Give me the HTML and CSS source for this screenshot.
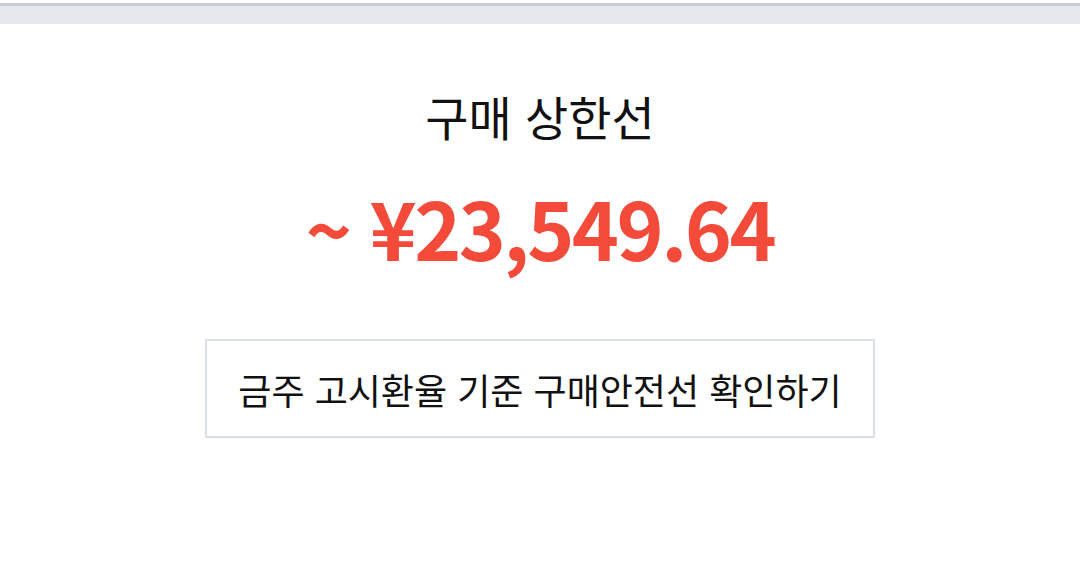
FILE: index.html
```html
<!DOCTYPE html>
<html lang="ko">
<head>
  <meta charset="UTF-8">
  <title>구매 상한선</title>
  <link rel="stylesheet" href="styles.css">
</head>
<body>
  <div class="topbar"></div>

  <div class="container">
    <h1 class="title">구매 상한선</h1>
    <div class="price"><span class="tilde">~</span>¥23,549.64</div>
    <button class="check">금주 고시환율 기준 구매안전선 확인하기</button>
  </div>
</body>
</html>
```

FILE: styles.css
```css
body {
  margin: 0;
  background-color: #ffffff;
  font-family: 'Noto Sans CJK KR', 'Noto Sans', sans-serif;
}

.topbar {
  margin-top: 3px;
  height: 18px;
  border-top: 3px solid #c6cdd8;
  background-color: #e4e7eb;
}

.container {
  display: flex;
  flex-direction: column;
  align-items: center;
  padding-top: 62px;
}

.title {
  margin: 0;
  font-size: 47px;
  font-weight: 400;
  line-height: 60px;
  color: #111111;
}

.price {
  margin-top: 30px;
  font-size: 80px;
  font-weight: 700;
  line-height: 100px;
  color: #f44a3a;
  letter-spacing: -2.5px;
}

.tilde {
  font-size: 78px;
  font-weight: 700;
  margin-right: 20px;
}

.check {
  margin-top: 62px;
  width: 670px;
  height: 99px;
  background-color: #ffffff;
  border: 2px solid #dce0e7;
  font-family: 'Noto Sans CJK KR', 'Noto Sans', sans-serif;
  font-size: 36px;
  color: #111111;
  cursor: pointer;
}
```
